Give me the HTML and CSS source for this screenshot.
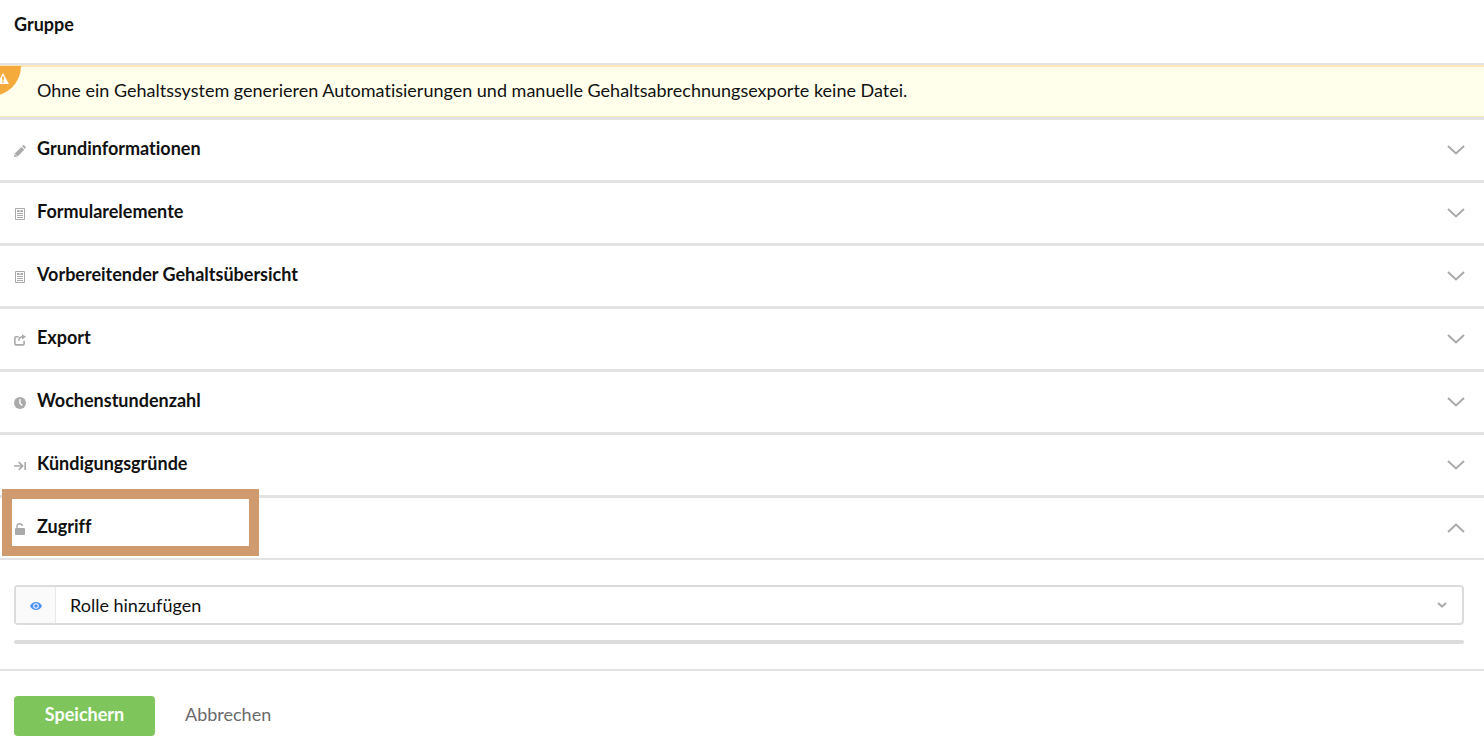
FILE: index.html
```html
<!DOCTYPE html>
<html lang="de">
<head>
<meta charset="utf-8">
<meta name="viewport" content="width=device-width, initial-scale=1">
<title>Gruppe</title>
<link rel="stylesheet" href="styles.css">
</head>
<body>
<header class="page-header"><h1 class="page-title">Gruppe</h1></header>
<main>
  <div class="alert" role="alert">
    <span class="alert-badge"><svg class="alert-icon" viewBox="0 0 12 11" aria-hidden="true"><path fill="#fff" fill-rule="evenodd" d="M6 0 12 11H0ZM5 3.6 5.3 7.4H6.7L7 3.6ZM5.2 8.2V9.8H6.8V8.2Z"/></svg></span>
    <p class="alert-text">Ohne ein Gehaltssystem generieren Automatisierungen und manuelle Gehaltsabrechnungsexporte keine Datei.</p>
  </div>

  <h2 class="section"><button class="section-toggle" type="button" aria-expanded="false">
    <svg class="section-icon" viewBox="0 0 12 12" aria-hidden="true"><path fill="currentColor" d="M0 12 .8 8.6 7.4 2 10.2 4.8 3.6 11.4ZM8.1 1.3 9.1.3Q9.6-.1 10.1.3L11.7 1.9Q12.1 2.4 11.7 2.9L10.9 3.9Z"/><path stroke="#fff" stroke-width=".6" d="M1 9 3 11"/></svg>
    <span class="section-label">Grundinformationen</span>
    <svg class="chevron" viewBox="0 0 18 10" aria-hidden="true"><path d="M1 1 9 8.5 17 1"/></svg>
  </button></h2>

  <h2 class="section"><button class="section-toggle" type="button" aria-expanded="false">
    <svg class="section-icon" viewBox="0 0 12 12" aria-hidden="true"><path fill="none" stroke="currentColor" d="M1.5.5H10.5V11.5H1.5ZM3 5.5H9M3 7.5H9M3 9.5H9M6.5 3.5H9"/><path fill="currentColor" d="M3 2H5.5V4H3ZM6.5 2H9V4H6.5Z"/></svg>
    <span class="section-label">Formularelemente</span>
    <svg class="chevron" viewBox="0 0 18 10" aria-hidden="true"><path d="M1 1 9 8.5 17 1"/></svg>
  </button></h2>

  <h2 class="section"><button class="section-toggle" type="button" aria-expanded="false">
    <svg class="section-icon" viewBox="0 0 12 12" aria-hidden="true"><path fill="none" stroke="currentColor" d="M1.5.5H10.5V11.5H1.5ZM3 5.5H9M3 7.5H9M3 9.5H9M6.5 3.5H9"/><path fill="currentColor" d="M3 2H5.5V4H3ZM6.5 2H9V4H6.5Z"/></svg>
    <span class="section-label">Vorbereitender Gehaltsübersicht</span>
    <svg class="chevron" viewBox="0 0 18 10" aria-hidden="true"><path d="M1 1 9 8.5 17 1"/></svg>
  </button></h2>

  <h2 class="section"><button class="section-toggle" type="button" aria-expanded="false">
    <svg class="section-icon" viewBox="0 0 12 12" aria-hidden="true"><path fill="none" stroke="currentColor" stroke-width="1.6" d="M4.5 2.7H2Q.9 2.7.9 3.8V9.8Q.9 10.9 2 10.9H9Q10.1 10.9 10.1 9.8V6.8M4.8 6.8Q4.8 3 8.5 2.8"/><path fill="currentColor" d="M8 .2 12 2.8 8 5.4Z"/></svg>
    <span class="section-label">Export</span>
    <svg class="chevron" viewBox="0 0 18 10" aria-hidden="true"><path d="M1 1 9 8.5 17 1"/></svg>
  </button></h2>

  <h2 class="section"><button class="section-toggle" type="button" aria-expanded="false">
    <svg class="section-icon" viewBox="0 0 12 12" aria-hidden="true"><circle cx="6" cy="6" r="6" fill="currentColor"/><path fill="none" stroke="#fff" stroke-width="1.4" d="M5.9 2V6.2L8.2 8.5"/></svg>
    <span class="section-label">Wochenstundenzahl</span>
    <svg class="chevron" viewBox="0 0 18 10" aria-hidden="true"><path d="M1 1 9 8.5 17 1"/></svg>
  </button></h2>

  <h2 class="section"><button class="section-toggle" type="button" aria-expanded="false">
    <svg class="section-icon" viewBox="0 0 12 12" aria-hidden="true"><path fill="none" stroke="currentColor" stroke-width="1.7" d="M0 6H8.5M4.8 2.2 8.6 6 4.8 9.8M11.2 2V10"/></svg>
    <span class="section-label">Kündigungsgründe</span>
    <svg class="chevron" viewBox="0 0 18 10" aria-hidden="true"><path d="M1 1 9 8.5 17 1"/></svg>
  </button></h2>

  <h2 class="section section-open"><button class="section-toggle" type="button" aria-expanded="true" aria-controls="access">
    <svg class="section-icon" viewBox="0 0 12 12" aria-hidden="true"><rect x="1" y="5" width="10" height="7" rx="1" fill="currentColor"/><path fill="none" stroke="currentColor" stroke-width="1.4" d="M3 5.5V3Q3 .8 5.6.8 8 .8 8.3 3"/></svg>
    <span class="section-label">Zugriff</span>
    <svg class="chevron" viewBox="0 0 18 10" aria-hidden="true"><path d="M1 9 9 1.5 17 9"/></svg>
  </button></h2>

  <div class="access" id="access">
    <div class="role-field">
      <label class="role-icon" for="role" aria-label="Rolle"><svg class="eye" viewBox="0 0 12 8" aria-hidden="true"><path fill="#4b92f2" fill-rule="evenodd" d="M0 4Q2 0 6 0T12 4Q10 8 6 8T0 4ZM6 1.2A2.8 2.8 0 1 0 6 6.8 2.8 2.8 0 1 0 6 1.2Z"/><circle cx="6" cy="4" r="1.8" fill="#4b92f2"/></svg></label>
      <select class="role-select" id="role"><option>Rolle hinzufügen</option></select>
      <svg class="role-arrow" viewBox="0 0 10 6" aria-hidden="true"><path d="M1 1 5 4.6 9 1"/></svg>
    </div>
    <div class="divider"></div>
  </div>
</main>
<footer class="actions">
  <button class="save" type="submit">Speichern</button>
  <button class="cancel" type="button">Abbrechen</button>
</footer>
</body>
</html>
```
FILE: styles.css
```css
* { box-sizing: border-box; }
body {
  margin: 0;
  background: #fff;
  color: #111;
  font: 400 18px/24px Lato, "Open Sans", sans-serif;
  font-variant-ligatures: none;
}
button, select { font: inherit; font-variant-ligatures: none; color: inherit; }
h1, h2, p { margin: 0; }
.page-header { padding: 12px 14px 27px; border-bottom: 2px solid #e3e3e3; }
.page-title { font-size: 18px; line-height: 24px; font-weight: 700; }

.alert {
  position: relative;
  overflow: hidden;
  padding: 13px 37px 15px;
  background: #ffffeb;
  box-shadow: inset 0 2px #fde5b8, inset 0 -1px #fde5b8;
}
.alert-badge {
  position: absolute;
  top: 1px;
  left: -9px;
  width: 30px;
  height: 30px;
  padding: 7px 6px;
  background: #f5ab3c;
  border-bottom-right-radius: 30px;
}
.alert-icon { display: block; width: 12px; height: 11px; }

.section { border-bottom: 3px solid #e3e3e3; font-size: 18px; line-height: 24px; }
.alert + .section { border-top: 3px solid #e3e3e3; }
.section-toggle {
  display: flex;
  align-items: center;
  gap: 11px;
  width: 100%;
  padding: 16px 19px 20px 14px;
  border: 0;
  background: none;
  font-weight: 700;
  text-align: left;
  cursor: pointer;
}
.section-icon { flex: none; width: 12px; height: 12px; margin-top: 5px; color: #aaa; }
.section-label { flex: 1; }
.chevron { flex: none; width: 18px; height: 10px; margin-top: 4px; }
.chevron path, .role-arrow path { fill: none; stroke: #aaa; stroke-width: 2; }
.section-open { position: relative; border-bottom-width: 2px; }
.section-open::after {
  content: "";
  box-sizing: border-box;
  position: absolute;
  top: -9px;
  left: 2px;
  width: 257px;
  height: 67px;
  border: 10px solid #cf9a6e;
  pointer-events: none;
}

.access { padding: 25px 20px 25px 14px; border-bottom: 2px solid #e3e3e3; }
.role-field {
  display: grid;
  grid-template-columns: 40px 1fr 32px;
  align-items: center;
  height: 40px;
  border: 2px solid #dcdcdc;
  border-radius: 4px;
}
.role-icon {
  display: grid;
  place-items: center;
  height: 36px;
  padding-top: 2px;
  background: #fafafa;
  border-right: 1px solid #e8e8e8;
}
.eye { width: 12px; height: 8px; }
.role-select {
  grid-column: 2 / 4;
  grid-row: 1;
  height: 36px;
  padding: 0 14px;
  border: 0;
  background: transparent;
  appearance: none;
}
.role-arrow { grid-column: 3; grid-row: 1; width: 10px; height: 6px; margin-left: 7px; pointer-events: none; }
.divider { height: 4px; margin-top: 15px; border-radius: 2px; background: #dcdcdc; }

.actions { display: flex; gap: 30px; padding: 25px 14px 10px; }
.save, .cancel { height: 40px; padding: 0 0 4px; border: 0; background: none; cursor: pointer; }
.save { min-width: 141px; border-radius: 4px; background: #7ec65c; color: #fff; font-weight: 700; }
.cancel { color: #6b6b6b; }
```
